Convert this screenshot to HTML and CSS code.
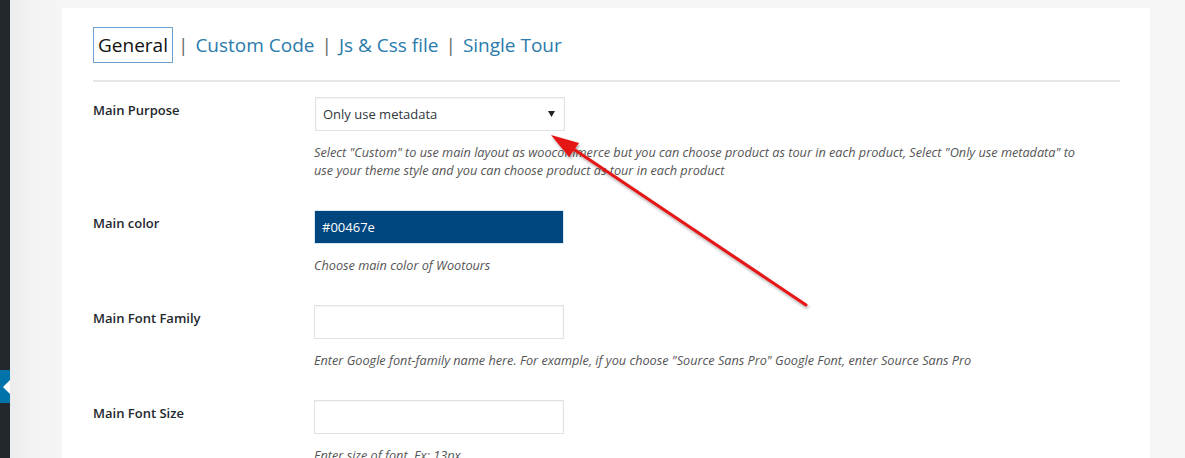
FILE: index.html
```html
<!DOCTYPE html>
<html>
<head>
<meta charset="utf-8">
<link rel="stylesheet" href="styles.css">
</head>
<body>
<div class="app">
  <aside class="sidebar">
    <div class="collapse-tab"><span class="collapse-arrow"></span></div>
  </aside>
  <main class="page">
    <section class="panel">
      <nav class="tabs">
        <a class="tab tab-active">General</a>
        <span class="tab-sep">|</span>
        <a class="tab">Custom Code</a>
        <span class="tab-sep">|</span>
        <a class="tab">Js &amp; Css file</a>
        <span class="tab-sep">|</span>
        <a class="tab">Single Tour</a>
      </nav>
      <div class="divider"></div>
      <div class="form">
        <div class="row">
          <div class="label">Main Purpose</div>
          <div class="field">
            <div class="select">
              <span>Only use metadata</span>
              <svg class="caret" width="7" height="6" viewBox="0 0 7 6"><path d="M0 0 H7 L3.5 6 Z" fill="#222"/></svg>
            </div>
            <p class="desc">Select "Custom" to use main layout as woocommerce but you can choose product as tour in each product, Select "Only use metadata" to use your theme style and you can choose product as tour in each product</p>
          </div>
        </div>
        <div class="row">
          <div class="label">Main color</div>
          <div class="field">
            <div class="input color-input">#00467e</div>
            <p class="desc">Choose main color of Wootours</p>
          </div>
        </div>
        <div class="row">
          <div class="label">Main Font Family</div>
          <div class="field">
            <div class="input"></div>
            <p class="desc">Enter Google font-family name here. For example, if you choose "Source Sans Pro" Google Font, enter Source Sans Pro</p>
          </div>
        </div>
        <div class="row">
          <div class="label">Main Font Size</div>
          <div class="field">
            <div class="input"></div>
            <p class="desc">Enter size of font. Ex: 13px</p>
          </div>
        </div>
      </div>
    </section>
  </main>
</div>
<svg class="annotation" width="1185" height="458" viewBox="0 0 1185 458">
  <defs>
    <filter id="sh" x="-10%" y="-10%" width="130%" height="130%">
      <feDropShadow dx="1" dy="2" stdDeviation="1.5" flood-color="#000" flood-opacity="0.35"/>
    </filter>
  </defs>
  <g filter="url(#sh)">
    <line x1="572" y1="148" x2="806" y2="305" stroke="#e41414" stroke-width="3" stroke-linecap="round"/>
    <path d="M551 135 L579 143 L569 157 Z" fill="#e41414"/>
  </g>
</svg>
</body>
</html>
```
FILE: styles.css
```css
* { box-sizing: border-box; }
html, body { margin: 0; padding: 0; }
body {
  width: 1185px;
  height: 458px;
  overflow: hidden;
  background: #f1f1f1;
  font-family: "Open Sans", "Noto Sans", sans-serif;
  color: #23282d;
  position: relative;
}
.app {
  display: flex;
  height: 458px;
}
.sidebar {
  width: 10px;
  flex: none;
  background: #23282d;
  display: flex;
  flex-direction: column;
  justify-content: flex-end;
  padding-bottom: 55px;
}
.collapse-tab {
  height: 33px;
  background: #0073aa;
  display: flex;
  align-items: center;
  justify-content: flex-end;
}
.collapse-arrow {
  width: 0;
  height: 0;
  border-top: 7px solid transparent;
  border-bottom: 7px solid transparent;
  border-right: 7px solid #fff;
}
.page {
  flex: 1;
  padding: 8px 35px 0 52px;
  background: linear-gradient(to right, #ececec 0, #f3f3f4 20px, #f5f5f6 52px);
}
.panel {
  background: #fff;
  height: 100%;
  padding: 19px 30px 0 31px;
}
.tabs {
  display: flex;
  align-items: center;
  gap: 7px;
  font-size: 19px;
  line-height: 26px;
}
.tab {
  color: #2a7bab;
  text-decoration: none;
}
.tab-active {
  color: #111;
  border: 1px solid #6ea1cf;
  padding: 4px;
  line-height: 26px;
  margin-right: -2px;
}
.tab-sep {
  color: #666;
}
.divider {
  height: 2px;
  background: #e6e6e8;
  margin-top: 17px;
}
.form {
  display: flex;
  flex-direction: column;
}
.row {
  display: grid;
  grid-template-columns: 221px 1fr;
  padding: 15px 0 16px;
}
.label {
  font-size: 13px;
  font-weight: 600;
  line-height: 18px;
  padding-top: 4px;
  color: #23282d;
}
.field {
  display: flex;
  flex-direction: column;
}
.select, .input {
  width: 250px;
  height: 34px;
  border: 1px solid #e2e2e2;
  box-shadow: inset 0 1px 2px rgba(0,0,0,0.05);
  background: #fff;
  font-size: 13px;
  color: #32373c;
  display: flex;
  align-items: center;
  padding: 0 7px;
}
.select {
  justify-content: space-between;
  margin-left: 1px;
}
.caret { margin-right: 2px; }
.color-input {
  background: #00467e;
  border-color: #dce9f2;
  color: #fff;
  box-shadow: none;
}
.desc {
  margin: 12px 0 0;
  font-size: 12.7px;
  font-style: italic;
  line-height: 18px;
  color: #555;
  max-width: 772px;
}
.annotation {
  position: absolute;
  left: 0;
  top: 0;
  pointer-events: none;
}
```
